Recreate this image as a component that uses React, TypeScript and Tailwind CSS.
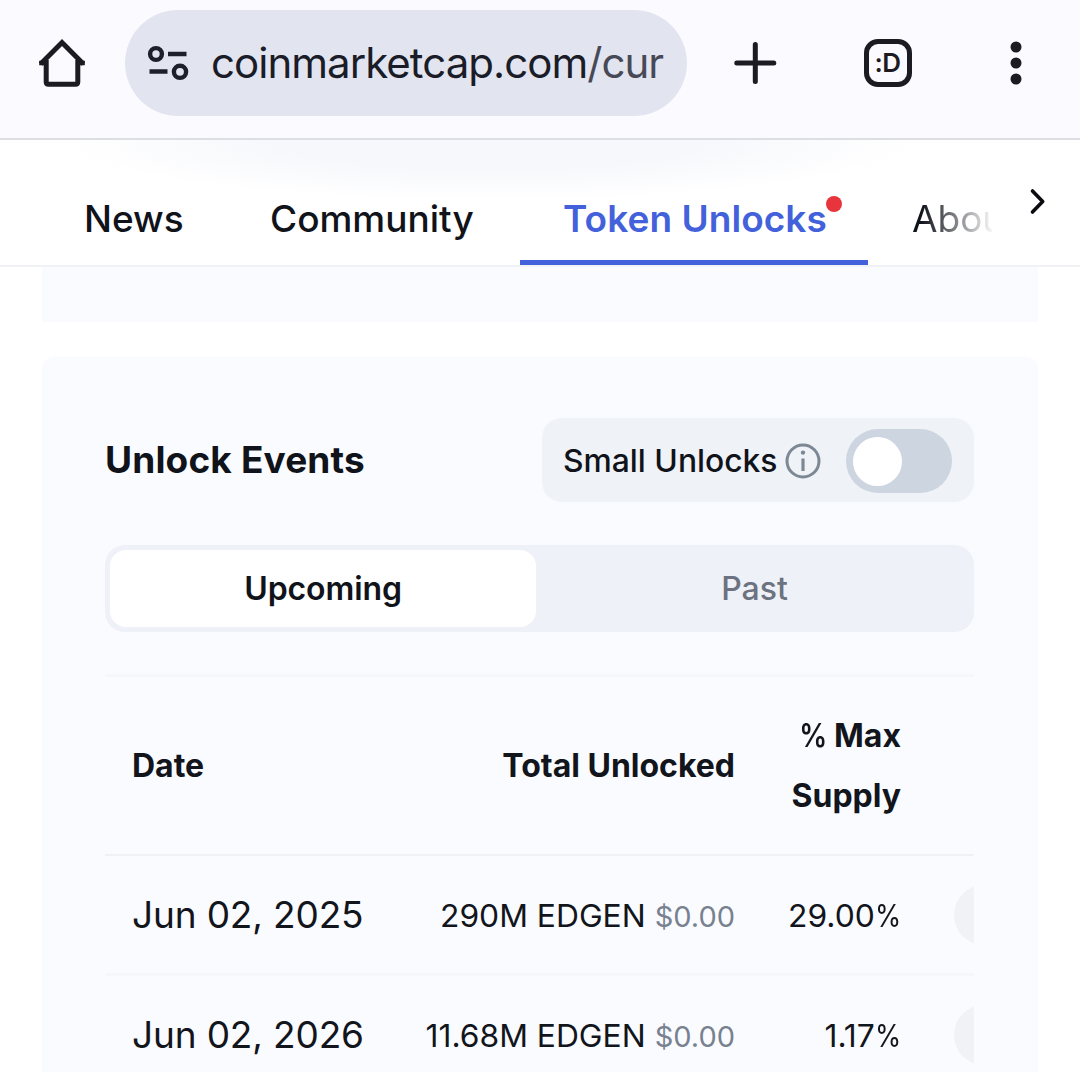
import React from "react";

type UnlockRow = { date: string; amount: string; value: string; pct: string };

const rows: UnlockRow[] = [
  { date: "Jun 02, 2025", amount: "290M EDGEN", value: "$0.00", pct: "29.00" },
  { date: "Jun 02, 2026", amount: "11.68M EDGEN", value: "$0.00", pct: "1.17" },
];

function HomeIcon() {
  return (
    <svg width="50" height="50" viewBox="0 0 50 50" fill="none" stroke="#1b1b21" strokeWidth="5">
      <path d="M9.2 22V44Q9.2 46.3 11.5 46.3H38.5Q40.8 46.3 40.8 44V22" />
      <path d="M3.6 26L25 4.6L46.4 26" />
      <path d="M2.2 25H9M41 25H47.8" strokeWidth="4.4" />
    </svg>
  );
}

function SiteSettingsIcon() {
  return (
    <svg width="42" height="36" viewBox="0 0 42 36" fill="none" stroke="#1d202b" strokeWidth="4.4">
      <circle cx="9" cy="9" r="5.9" />
      <path d="M21 9H39.5M2.5 26.5H20.5" />
      <circle cx="33" cy="26.8" r="6.1" />
    </svg>
  );
}

function BrowserBar() {
  return (
    <header className="flex h-[140px] shrink-0 items-start border-b-2 border-[#dddde4] bg-[#fbfaff] pt-[10px]">
      <div className="ml-[37px] mt-[28px] w-[50px]">
        <HomeIcon />
      </div>
      <div className="ml-[38px] flex h-[106px] w-[562px] items-center rounded-full bg-[#e2e5f0] pl-[22px]">
        <SiteSettingsIcon />
        <span className="ml-[22px] whitespace-nowrap text-[42px] font-normal leading-none tracking-[-0.97px] text-[#1a1c28]">
          coinmarketcap.com<span className="text-[#474a56]">/cur</span>
        </span>
      </div>
      <svg className="ml-[46px] mt-[31px]" width="44" height="44" viewBox="0 0 44 44" stroke="#1b1b21" strokeWidth="5" strokeLinecap="round">
        <path d="M22.3 3.5V40.5M3.8 22H40.8" />
      </svg>
      <div className="ml-[87px] mt-[29px] flex h-[48px] w-[48px] items-center justify-center rounded-[14px] border-[5px] border-[#1b1b21] pr-px text-[26px] font-semibold leading-none tracking-[-0.5px] text-[#1b1b21]">
        :D
      </div>
      <svg className="ml-[98px] mt-[31px]" width="12" height="44" viewBox="0 0 12 44" fill="#1b1b21">
        <circle cx="6" cy="6" r="5.5" />
        <circle cx="6" cy="22" r="5.5" />
        <circle cx="6" cy="38" r="5.5" />
      </svg>
    </header>
  );
}

function TabBar() {
  return (
    <nav className="relative flex h-[127px] shrink-0 items-stretch border-b-2 border-[#f0f1f4] bg-white text-[37px] leading-[44px] text-[#10131a]">
      <div className="absolute left-[60px] top-0 h-[60px] w-[860px] bg-[radial-gradient(430px_60px_at_50%_0%,#f7f8fc_50%,#ffffff)]" />
      <div className="relative w-[186px] shrink-0 pl-[84px] pt-[57px] font-medium">
        <span className="whitespace-nowrap">News</span>
      </div>
      <div className="relative w-[334px] shrink-0 pl-[84px] pt-[57px] font-medium">
        <span className="whitespace-nowrap">Community</span>
      </div>
      <div className="relative w-[348px] shrink-0 border-b-[5px] border-[#4361db] pl-[43px] pt-[57px] font-semibold text-[#4361db]">
        <span className="whitespace-nowrap tracking-[0.05px]">Token Unlocks</span>
        <span className="absolute left-[306px] top-[56px] h-4 w-4 rounded-full bg-[#e8353d]" />
      </div>
      <div className="relative w-[124px] shrink-0 overflow-hidden pl-[44px] pt-[57px]">
        <span className="inline-block bg-gradient-to-r from-[#10131a] from-10% to-transparent to-90% bg-clip-text text-transparent">Abou</span>
      </div>
      <svg className="ml-[36px] mt-[47px]" width="20" height="28" viewBox="0 0 20 28" fill="none" stroke="#0b0c10" strokeWidth="3.6" strokeLinecap="round" strokeLinejoin="round">
        <path d="M4.5 4L14.7 14.5L4.5 25" />
      </svg>
    </nav>
  );
}

function SmallUnlocksToggle() {
  return (
    <div className="flex h-[84px] w-[432px] items-center rounded-[20px] bg-[#eff2f6] pl-[21px]">
      <span className="w-[222px] whitespace-nowrap pt-[2px] text-[31.8px] font-medium text-[#10131a]">Small Unlocks</span>
      <svg className="mt-px" width="36" height="36" viewBox="0 0 36 36" fill="none" stroke="#7d8894" strokeWidth="3">
        <circle cx="18" cy="18" r="16" />
        <path d="M18 15.5V28" strokeWidth="3.2" />
        <circle cx="18" cy="9.6" r="2.2" fill="#7d8894" stroke="none" />
      </svg>
      <div className="ml-[25px] mt-[2px] flex h-[64px] w-[106px] items-center rounded-full bg-[#cdd5e1] pl-[7px]">
        <div className="h-[49px] w-[49px] rounded-full bg-white" />
      </div>
    </div>
  );
}

function EventsTable() {
  return (
    <div className="mt-[42px] w-[869px] overflow-hidden border-t-[3px] border-[#f5f7fb] text-[#12151c]">
      <div className="flex h-[179px] items-center border-b-2 border-[#eff1f5] text-[32px] font-bold">
        <div className="w-[200px] pl-[27px]">Date</div>
        <div className="w-[430px] text-right">Total Unlocked</div>
        <div className="w-[166px] text-right leading-[60px]">
          <span className="-mr-px inline-block origin-right scale-x-[0.87] font-semibold">%</span> Max
          <br />
          Supply
        </div>
      </div>
      {rows.map((r) => (
        <div key={r.date} className="flex h-[120px] items-center border-b-[3px] border-[#f6f7fb]">
          <div className="w-[290px] shrink-0 whitespace-nowrap pl-[27px] text-[37px] tracking-[-0.15px]">{r.date}</div>
          <div className="w-[340px] shrink-0 whitespace-nowrap pt-[3px] text-right text-[31.8px]">
            {r.amount} <span className="text-[29px] text-[#788190]">{r.value}</span>
          </div>
          <div className="w-[166px] shrink-0 whitespace-nowrap pt-[3px] text-right text-[31.8px]">
            {r.pct}
            <span className="-ml-[5px] inline-block origin-right scale-x-[0.84]">%</span>
          </div>
          <div className="ml-[53px] h-[60px] w-[60px] shrink-0 rounded-full bg-[#f1f2f5]" />
        </div>
      ))}
    </div>
  );
}

export default function App() {
  return (
    <div className="flex h-[1072px] w-[1080px] flex-col overflow-hidden bg-white font-['Inter',sans-serif]">
      <BrowserBar />
      <TabBar />
      <div className="ml-[42px] h-[55px] w-[996px] shrink-0 bg-[#fafbff]" />
      <main className="ml-[42px] mt-[35px] h-[760px] w-[996px] shrink-0 rounded-t-[12px] bg-[#fafbff] pl-[63px] pt-[61px]">
        <div className="flex w-[869px] items-center justify-between">
          <h2 className="whitespace-nowrap text-[37px] font-bold tracking-[0.15px] text-[#10131a]">Unlock Events</h2>
          <SmallUnlocksToggle />
        </div>
        <div className="mt-[43px] flex h-[87px] w-[869px] rounded-[20px] bg-[#eef1f7] p-[5px] text-[32px]">
          <div className="flex w-[426px] items-center justify-center rounded-[16px] bg-white font-semibold tracking-[-0.1px] text-[#10131a]">Upcoming</div>
          <div className="flex flex-1 items-center justify-center pl-1 font-medium text-[#6b7280]">Past</div>
        </div>
        <EventsTable />
      </main>
    </div>
  );
}
